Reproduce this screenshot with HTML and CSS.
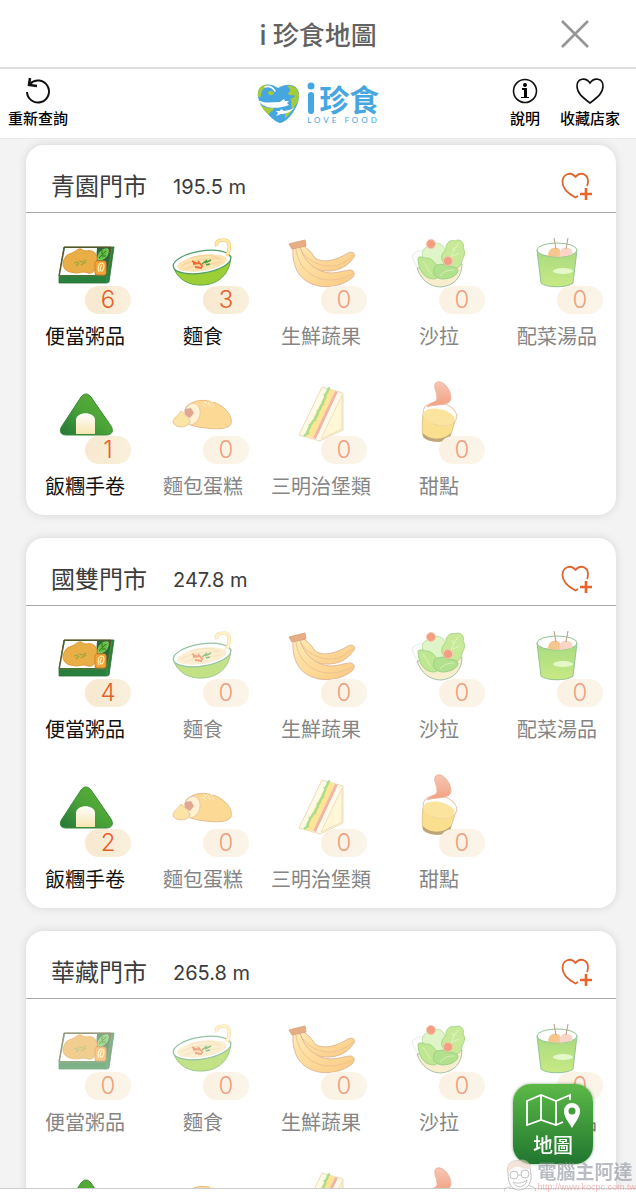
FILE: index.html
```html
<!DOCTYPE html>
<html lang="zh-Hant">
<head>
    <meta charset="UTF-8">
    <meta name="viewport" content="width=device-width, initial-scale=1.0">
    <title>i 珍食地圖</title>
    <link rel="stylesheet" href="styles.css">
</head>
<body>
    <!-- food icons -->
    <svg class="sprite" aria-hidden="true">
        <defs>
            <linearGradient id="g-green" x1="1" y1="0" x2="0" y2="1">
                <stop offset="0" stop-color="#5fb336"/><stop offset="0.5" stop-color="#4aa337"/><stop offset="1" stop-color="#23763a"/>
            </linearGradient>
            <linearGradient id="g-lime" x1="0" y1="0" x2="0" y2="1">
                <stop offset="0" stop-color="#6fc32c"/><stop offset="1" stop-color="#a5dc34"/>
            </linearGradient>
            <linearGradient id="g-banana" x1="0" y1="0" x2="1" y2="1">
                <stop offset="0" stop-color="#ffdf85"/><stop offset="1" stop-color="#f9a72e"/>
            </linearGradient>
            <linearGradient id="g-cream" x1="0" y1="0" x2="0" y2="1">
                <stop offset="0" stop-color="#fff"/><stop offset="1" stop-color="#f6e6b0"/>
            </linearGradient>
            <linearGradient id="g-lid" x1="0" y1="0" x2="0" y2="1">
                <stop offset="0" stop-color="#f3a184"/><stop offset="1" stop-color="#e8622c"/>
            </linearGradient>
        </defs>
        <symbol id="bento" viewBox="0 0 80 64">
            <path d="M19 17H69L64 52L62 53H14V45Z" fill="#27803c" stroke="#2d7038" stroke-width="0.8"/>
            <path d="M19 17H66L62 46H14Z" fill="#2a6a33" stroke="#7c4a22" stroke-width="0.8"/>
            <path d="M20 18H52L50 45H15Z" fill="#fff"/>
            <path d="M27 23C30 22 31 20 34 19C37 18 37 21 41 21C45 20 50 21 51 25C53 29 51 32 50 35C51 40 48 44 43 43C38 41 35 43 31 43C27 42 24 43 20 39C17 35 18 31 20 28C21 25 24 24 27 23Z" fill="#e9ae45" stroke="#dc9838"/>
            <path d="M29 33l4-1M31 36l3-3M34 31l5 1M36 35l5-3M39 30l2 1" stroke="#93a93a" stroke-width="1.2"/>
            <path d="M53 30C52 24 57 18 63 19C64 24 61 30 53 30Z" fill="#62bd3c" stroke="#8ed36c"/>
            <path d="M54 28L61 21M57 26l4 0M57 24l0-4" stroke="#2a7a2b" fill="none"/>
            <rect x="50" y="31" width="11" height="14" rx="2" fill="#f4a437" stroke="#d9822a"/>
            <path d="M54 42C52 37 54 33 57 33C60 34 59 39 57 41C54 41 55 37 57 35" fill="none" stroke="#fff0b3" stroke-width="1.2"/>
            <path d="M14 46H62V53M62 46L67 18" fill="none" stroke="#3f9850" stroke-width="0.8"/>
        </symbol>
        <symbol id="noodle" viewBox="0 0 80 64">
            <path d="M10 35C13 49 26 56 40 55C56 54 67 44 68 26Z" fill="#9bcf35" stroke="#5ea846"/>
            <ellipse cx="39" cy="32" rx="29" ry="11" transform="rotate(-9 39 32)" fill="#fff" stroke="#4f9c6a" stroke-width="1.2"/>
            <ellipse cx="39" cy="33" rx="25" ry="8" transform="rotate(-9 39 33)" fill="#fbe3b4"/>
            <path d="M18 36c10-6 25-8 40-7M22 39c11-5 23-4 36-7M27 28c11-3 20-4 29 0" fill="none" stroke="#f4d194"/>
            <path d="M30 34l7-1M32 37l7 1M35 31l5 6M29 31l5 3" stroke="#ec6a35" stroke-width="1.8"/>
            <path d="M39 34l5-4M42 33l6-3M43 35l4-1" stroke="#4ba13a" stroke-width="1.6"/>
            <path d="M64 26C67 19 68 9 60 10C56 10 52 12 54 16" fill="none" stroke="#f3cd6f" stroke-width="3.600"/>
            <path d="M64 26C67 19 68 9 60 10C56 10 52 12 54 16" fill="none" stroke="#ffedb0" stroke-width="2"/>
        </symbol>
        <symbol id="banana" viewBox="0 0 80 64">
            <path d="M14 17C19 12 23 15 25 18C29 20 31 24 34 28C42 34 56 30 67 23C71 21 75 23 73 27C67 36 58 41 47 41C29 41 15 30 14 17Z" fill="url(#g-banana)" stroke="#cf8a55"/>
            <path d="M19 18C24 30 39 37 52 36C61 35 68 29 73 25" fill="none" stroke="#e29a4e"/>
            <path d="M12 18C17 15 19 17 20 20C24 32 35 42 49 43C58 43 64 40 70 40C74 41 74 45 71 48C62 55 50 58 38 56C18 52 11 37 12 18Z" fill="url(#g-banana)" stroke="#cf8a55"/>
            <path d="M15 19C17 37 31 50 49 50C60 50 67 46 72 44" fill="none" stroke="#e29a4e"/>
            <path d="M8 14L24 10L25 16L11 19Z" fill="#d97a32" stroke="#c66c32"/>
        </symbol>
        <symbol id="salad" viewBox="0 0 80 64">
            <path d="M19 38C16 34 12 27 14 24C18 22 20 20 24 21" fill="#fff" stroke="#d3dccf"/>
            <path d="M18 38C22 50 31 57 42 57C54 56 63 48 63 34Z" fill="#f5e3ae" stroke="#6b9b70"/>
            <path d="M24 27C21 20 28 15 32 17C37 10 46 14 46 22L44 38H28Z" fill="#cdf0a2" stroke="#8fcf66"/>
            <path d="M48 35C40 31 42 23 47 20C46 13 52 9 56 11C61 8 66 13 64 18C67 22 65 27 63 30C63 36 58 40 51 38Z" fill="#a5dc55" stroke="#6fbb3c"/>
            <path d="M49 34C53 26 54 20 59 14M55 20l-2-3M54 26l6-3" fill="none" stroke="#d2ef9f"/>
            <path d="M19 28C22 25 26 29 29 28C35 30 37 34 39 39C42 44 40 48 35 49C24 49 19 38 19 28Z" fill="#96d84a" stroke="#66b83c"/>
            <path d="M35 39C36 33 42 35 45 34C49 38 57 35 59 40C59 45 52 49 43 49C38 48 33 46 35 39Z" fill="#7fce42" stroke="#5cae38"/>
            <path d="M41 46C46 40 51 40 55 40M24 31l8 13" fill="none" stroke="#c2e58b"/>
            <circle cx="32" cy="14" r="4.5" fill="#ea5e2d" stroke="#f3a179"/>
            <circle cx="49" cy="31" r="4.5" fill="#ea5e2d" stroke="#f3a179"/>
        </symbol>
        <symbol id="soup" viewBox="0 0 80 64">
            <path d="M20 20L24 53C29 58 51 58 56 53L60 20Z" fill="url(#g-lime)" stroke="#4b9b50"/>
            <ellipse cx="40" cy="20" rx="20" ry="7" fill="#fff" stroke="#4b9b50"/>
            <path d="M31 26C31 20 35 17 39 18C44 18 44 22 43 27Z" fill="#f3a145"/>
            <path d="M43 27C41 20 46 17 50 18C55 18 56 21 55 25Z" fill="#f7b89e"/>
            <path d="M37 8L39 19M51 8L49 19" stroke="#8b5b30"/>
            <ellipse cx="46" cy="41" rx="10" ry="3" fill="#d5f4a8"/>
        </symbol>
        <symbol id="onigiri" viewBox="0 0 80 64">
            <path d="M36 17C39 13 43 13 46 17L66 46C69 51 67 55 61 55H21C15 55 14 50 17 46Z" fill="url(#g-green)" stroke="#3a8a38"/>
            <path d="M31 54V40C31 31 50 31 50 40V54Z" fill="url(#g-cream)"/>
        </symbol>
        <symbol id="bread" viewBox="0 0 80 64">
            <path d="M23 27C31 19 42 19 53 23C64 28 70 37 68 44C65 50 50 49 43 48C35 47 27 46 23 42Z" fill="#fbc350" stroke="#d79340"/>
            <ellipse cx="29" cy="34" rx="8" ry="11" transform="rotate(15 29 34)" fill="#ffeab7" stroke="#dfa46e"/>
            <path d="M22 29L28 28L31 33L27 38L22 35Z" fill="#cc6d4e"/>
            <path d="M18 31C21 34 26 37 27 42C24 49 11 48 10 42C10 38 15 36 18 31Z" fill="#fbd36b" stroke="#dfa05c"/>
            <path d="M40 24l3 3M45 23l2 3M50 24l0 3M41 22l3 1M47 21l3 1" stroke="#fff1bb"/>
        </symbol>
        <symbol id="sandwich" viewBox="0 0 80 64">
            <path d="M41 7L62 13V50L39 61L18 55Z" fill="#fff7d5" stroke="#e4c58c"/>
            <path d="M47 9L54 11L32 58L23 56Z" fill="#ffd44e"/>
            <path d="M54 11L57 12L35 59L32 58Z" fill="#e8876b"/>
            <path d="M57 12L61 14L39 60L35 59Z" fill="#fff5e1"/>
            <path d="M49 8C45 9 48 13 44 15C46 18 41 20 42 24C39 25 40 30 37 31C38 35 34 36 34 40C31 40 32 44 29 45C30 49 25 50 27 53L23 56" fill="none" stroke="#72c744" stroke-width="2.500"/>
            <path d="M61 15V49L40 59Z" fill="#fff3bf" stroke="#e8ce89"/>
        </symbol>
        <symbol id="pudding" viewBox="0 0 80 64">
            <path d="M24 34C23 45 23 52 24 56C30 63 47 63 51 57L57 38Z" fill="#f8cb45" stroke="#c99a40"/>
            <path d="M24 53C30 60 44 61 52 53L51 58C46 63 29 63 24 57Z" fill="#926b22"/>
            <ellipse cx="41" cy="34" rx="17" ry="11" transform="rotate(14 41 34)" fill="#fff" stroke="#dba077"/>
            <ellipse cx="40" cy="37" rx="16" ry="8" transform="rotate(12 40 37)" fill="#f9d55e"/>
            <path d="M36 4C38 0 44 2 47 6C51 10 54 19 50 22C45 26 35 24 28 27C32 21 39 23 38 17C38 11 35 10 36 4Z" fill="url(#g-lid)" stroke="#e4855c"/>
        </symbol>
        <symbol id="heart-add" viewBox="0 0 32 32">
            <path d="M18 26L15.500 27.500C7 23 2.500 18 2.500 12C2.500 4 11 1 15.500 7C20 1 28 4 28 11C28 13 27.500 15 27 16" fill="none" stroke="#dc6530" stroke-width="1.800" stroke-linejoin="round"/>
            <path d="M26 18V30M20 24H32" fill="none" stroke="#e8642a" stroke-width="2.600"/>
        </symbol>
    </svg>

    <header class="title-bar">
        <h1>i 珍食地圖</h1>
        <button class="close" type="button" aria-label="關閉">
            <svg width="28" height="28" viewBox="0 0 28 28"><path d="M1 1L27 27M27 1L1 27" stroke="#959595" stroke-width="2.600"/></svg>
        </button>
    </header>

    <nav class="menu">
        <div class="menu-side">
            <a class="menu-item" href="#">
                <svg width="28" height="28" viewBox="0 0 28 28" fill="none" stroke="#111" stroke-width="2"><path d="M3 15A11 11 0 1 0 6 7"/><path d="M6 1L5 8L13 9" stroke-width="2.500"/></svg>
                重新查詢
            </a>
        </div>
        <div class="logo">
            <svg width="46" height="42" viewBox="0 0 46 42">
                <path d="M24 41C18 40 4 26 2 15C0 5 10-2 22 6C34-1 44 4 43 14C43 25 32 40 24 41Z" fill="#46a7e0"/>
                <path d="M2 12C2 6 7 2 11 3C9 6 6 7 5 13C5 16 3 16 2 14ZM12 10C14 8 18 9 18 11C17 14 12 14 12 10ZM31 4C38 2 43 7 43 14C42 21 39 25 36 27C34 23 37 19 34 17C38 16 40 14 38 13C33 14 31 12 33 10C36 8 33 6 31 4ZM4 22C8 26 13 26 18 26C17 30 13 29 13 33C9 30 6 26 4 22ZM29 31L36 28C34 32 31 35 29 36Z" fill="#a5cb3d"/>
                <path d="M2 18C9 22 17 20 24 20L28 17L29 19L33 19L31 21L33 23C23 27 8 28 2 18ZM39 25C35 30 30 32 25 32L20 34L22 31L20 29L24 29L25 27L28 29C33 28 37 27 39 25Z" fill="#fff"/>
                <path d="M9 5C14 3 17 6 19 9" fill="none" stroke="#fff" stroke-width="1.500" stroke-linecap="round"/>
            </svg>
            <div class="logo-words">
                <div class="logo-main">
                    <svg width="8" height="32" viewBox="0 0 8 32" fill="#46a7e0"><circle cx="4" cy="4" r="3.500"/><rect x="1" y="10" width="6" height="22" rx="3"/></svg>
                    <span>珍食</span>
                </div>
                <span class="logo-sub">LOVE FOOD</span>
            </div>
        </div>
        <div class="menu-side menu-right">
            <a class="menu-item" href="#">
                <svg width="28" height="28" viewBox="0 0 28 28"><circle cx="14" cy="14" r="11.500" fill="none" stroke="#111" stroke-width="1.600"/><circle cx="14" cy="8" r="2"/><path d="M11 11H16V20H18V21H10V20H13V13H11Z"/></svg>
                說明
            </a>
            <a class="menu-item" href="#">
                <svg width="28" height="28" viewBox="0 0 28 28"><path d="M14 26C6 20 1 16 1 9C1 1 10 0 14 6C18 0 27 1 27 9C27 16 22 20 14 26Z" fill="none" stroke="#111" stroke-width="1.600"/></svg>
                收藏店家
            </a>
        </div>
    </nav>

    <main class="store-list">
        <section class="store">
            <div class="store-head">
                <h2>青園門市</h2><span class="distance">195.5 m</span>
                <button class="favorite" type="button" aria-label="收藏青園門市"><svg width="32" height="32"><use href="#heart-add"/></svg></button>
            </div>
            <ul class="foods">
                <li class="food"><div class="pic"><svg><use href="#bento"/></svg><span class="count">6</span></div><p>便當粥品</p></li>
                <li class="food"><div class="pic"><svg><use href="#noodle"/></svg><span class="count">3</span></div><p>麵食</p></li>
                <li class="food empty"><div class="pic"><svg><use href="#banana"/></svg><span class="count">0</span></div><p>生鮮蔬果</p></li>
                <li class="food empty"><div class="pic"><svg><use href="#salad"/></svg><span class="count">0</span></div><p>沙拉</p></li>
                <li class="food empty"><div class="pic"><svg><use href="#soup"/></svg><span class="count">0</span></div><p>配菜湯品</p></li>
                <li class="food"><div class="pic"><svg><use href="#onigiri"/></svg><span class="count">1</span></div><p>飯糰手卷</p></li>
                <li class="food empty"><div class="pic"><svg><use href="#bread"/></svg><span class="count">0</span></div><p>麵包蛋糕</p></li>
                <li class="food empty"><div class="pic"><svg><use href="#sandwich"/></svg><span class="count">0</span></div><p>三明治堡類</p></li>
                <li class="food empty"><div class="pic"><svg><use href="#pudding"/></svg><span class="count">0</span></div><p>甜點</p></li>
            </ul>
        </section>

        <section class="store">
            <div class="store-head">
                <h2>國雙門市</h2><span class="distance">247.8 m</span>
                <button class="favorite" type="button" aria-label="收藏國雙門市"><svg width="32" height="32"><use href="#heart-add"/></svg></button>
            </div>
            <ul class="foods">
                <li class="food"><div class="pic"><svg><use href="#bento"/></svg><span class="count">4</span></div><p>便當粥品</p></li>
                <li class="food empty"><div class="pic"><svg><use href="#noodle"/></svg><span class="count">0</span></div><p>麵食</p></li>
                <li class="food empty"><div class="pic"><svg><use href="#banana"/></svg><span class="count">0</span></div><p>生鮮蔬果</p></li>
                <li class="food empty"><div class="pic"><svg><use href="#salad"/></svg><span class="count">0</span></div><p>沙拉</p></li>
                <li class="food empty"><div class="pic"><svg><use href="#soup"/></svg><span class="count">0</span></div><p>配菜湯品</p></li>
                <li class="food"><div class="pic"><svg><use href="#onigiri"/></svg><span class="count">2</span></div><p>飯糰手卷</p></li>
                <li class="food empty"><div class="pic"><svg><use href="#bread"/></svg><span class="count">0</span></div><p>麵包蛋糕</p></li>
                <li class="food empty"><div class="pic"><svg><use href="#sandwich"/></svg><span class="count">0</span></div><p>三明治堡類</p></li>
                <li class="food empty"><div class="pic"><svg><use href="#pudding"/></svg><span class="count">0</span></div><p>甜點</p></li>
            </ul>
        </section>

        <section class="store">
            <div class="store-head">
                <h2>華藏門市</h2><span class="distance">265.8 m</span>
                <button class="favorite" type="button" aria-label="收藏華藏門市"><svg width="32" height="32"><use href="#heart-add"/></svg></button>
            </div>
            <ul class="foods">
                <li class="food empty"><div class="pic"><svg><use href="#bento"/></svg><span class="count">0</span></div><p>便當粥品</p></li>
                <li class="food empty"><div class="pic"><svg><use href="#noodle"/></svg><span class="count">0</span></div><p>麵食</p></li>
                <li class="food empty"><div class="pic"><svg><use href="#banana"/></svg><span class="count">0</span></div><p>生鮮蔬果</p></li>
                <li class="food empty"><div class="pic"><svg><use href="#salad"/></svg><span class="count">0</span></div><p>沙拉</p></li>
                <li class="food empty"><div class="pic"><svg><use href="#soup"/></svg><span class="count">0</span></div><p>配菜湯品</p></li>
                <li class="food"><div class="pic"><svg><use href="#onigiri"/></svg></div></li>
                <li class="food empty"><div class="pic"><svg><use href="#bread"/></svg></div></li>
                <li class="food empty"><div class="pic"><svg><use href="#sandwich"/></svg></div></li>
                <li class="food empty"><div class="pic"><svg><use href="#pudding"/></svg></div></li>
            </ul>
        </section>
    </main>

    <footer class="bottom-bar"></footer>

    <button class="map-button" type="button">
        <svg width="56" height="36" viewBox="0 0 56 36" fill="none" stroke="#fff" stroke-width="1.800">
            <path d="M45 7V2L31 8L16 2L2 8V32L16 27L31 32L38 29M16 2V27M31 8V32"/>
            <path d="M47 35C43 28 39 24 39 18A8 8 0 0 1 55 18C55 24 51 28 47 35Z" fill="#fff" stroke="none"/>
            <circle cx="47" cy="18" r="3.500" fill="#3f9d3a" stroke="none"/>
        </svg>
        地圖
    </button>

    <div class="watermark">
        <svg width="34" height="34" viewBox="0 0 34 34" fill="#fff" stroke="#9a9a9a">
            <path d="M5 15C3 6 8 2 15 3C20 0 27 3 27 10L28 17C29 25 24 32 16 32C8 32 5 25 5 15Z"/>
            <path d="M5 14C3 5 9 2 15 3C21 0 28 4 27 11C22 13 17 8 13 9C9 9 8 13 5 14Z" fill="#eed2c4" stroke="none"/>
            <circle cx="11" cy="17" r="4"/><circle cx="22" cy="16" r="4"/>
            <path d="M15 17H18M10 24C15 26 20 25 24 22C23 30 13 31 10 24ZM1 33C3 29 6 29 8 29M26 28C30 28 32 30 33 33"/>
        </svg>
        <div class="watermark-text">
            <strong>電腦主阿達</strong>
            <span>http://www.kocpc.com.tw</span>
        </div>
    </div>
</body>
</html>
```
FILE: styles.css
```css
* {
    box-sizing: border-box;
}

body {
    font-family: "Noto Sans CJK TC", sans-serif;
    margin: 0;
    height: 100vh;
    display: flex;
    flex-direction: column;
    background-color: #f3f3f3;
    color: #111;
    overflow: hidden;
}

h1, h2, p, ul {
    margin: 0;
    padding: 0;
    font-weight: 400;
}

button {
    font-family: inherit;
    border: none;
    padding: 0;
    background: none;
    cursor: pointer;
}

svg {
    display: block;
}

.sprite {
    position: absolute;
    width: 0;
    height: 0;
}

.title-bar {
    display: grid;
    grid-template-columns: 1fr auto 1fr;
    align-items: center;
    flex: none;
    height: 69px;
    padding: 0 47px;
    background-color: #fff;
    border-bottom: 2px solid #dedede;
}

.title-bar h1 {
    grid-column: 2;
    font-size: 26px;
    font-weight: 500;
    color: #626262;
}

.close {
    justify-self: end;
}

.menu {
    display: grid;
    grid-template-columns: 1fr auto 1fr;
    align-items: center;
    flex: none;
    height: 70px;
    padding: 0 16px 2px 16px;
    background-color: #fff;
    border-bottom: 1px solid #e8e8e8;
}

.menu-side {
    display: flex;
    gap: 20px;
    margin-left: -8px;
}

.menu-right {
    justify-content: flex-end;
}

.menu-item {
    display: flex;
    flex-direction: column;
    align-items: center;
    gap: 2px;
    font-size: 15px;
    font-weight: 500;
    line-height: 22px;
    color: #000;
    text-decoration: none;
}

.logo {
    display: flex;
    align-items: center;
    gap: 5px;
    color: #46a7e0;
}

.logo-main {
    display: flex;
    align-items: center;
    gap: 4px;
    font-size: 30px;
    font-weight: 700;
    line-height: 34px;
}

.logo-sub {
    display: block;
    font-family: Lato, sans-serif;
    font-size: 8px;
    line-height: 10px;
    letter-spacing: 3px;
}

.store-list {
    flex: 1;
    min-height: 0;
    overflow: hidden;
    display: flex;
    flex-direction: column;
    gap: 23px;
    padding: 6px 20px 0 26px;
}

.store {
    flex: none;
    background-color: #fff;
    border-radius: 18px;
    box-shadow: 0 0 10px rgba(0, 0, 0, 0.12);
}

.store-head {
    display: flex;
    align-items: center;
    height: 68px;
    padding: 14px 24px 0 25px;
    border-bottom: 1px solid #a8a8a8;
    color: #3c3c3c;
}

.store-head h2 {
    font-size: 24px;
    line-height: 32px;
    margin: 0 26px 2px 0;
}

.distance {
    font-family: Inter, sans-serif;
    font-size: 20px;
    line-height: 28px;
    padding-top: 2px;
}

.favorite {
    margin-left: auto;
}

.foods {
    display: grid;
    grid-template-columns: repeat(5, 1fr);
    row-gap: 30px;
    padding: 17px 0 15px;
    list-style: none;
}

.food {
    display: flex;
    flex-direction: column;
    align-items: center;
    gap: 8px;
}

.food p {
    font-size: 20px;
    line-height: 28px;
    white-space: nowrap;
}

.pic {
    position: relative;
    width: 80px;
    height: 84px;
}

.pic svg {
    width: 80px;
    height: 64px;
}

/* stock left, over the lower right of the icon */
.count {
    position: absolute;
    right: -6px;
    bottom: 0;
    width: 46px;
    height: 28px;
    border-radius: 14px;
    background: linear-gradient(90deg, #f8e8cf, #f9f0dc);
    font-family: Inter, sans-serif;
    font-size: 24px;
    font-weight: 300;
    line-height: 28px;
    text-align: center;
    color: #e4602b;
}

.empty .pic {
    opacity: 0.6;
}

.empty p {
    color: #858585;
}

.bottom-bar {
    flex: none;
    height: 12px;
    background-color: #fff;
    border-top: 1px solid #ccc;
    z-index: 1;
}

.map-button {
    position: fixed;
    right: 43px;
    bottom: 36px;
    width: 80px;
    height: 80px;
    display: flex;
    flex-direction: column;
    align-items: center;
    justify-content: center;
    gap: 2px;
    padding-top: 4px;
    border-radius: 18px;
    background: linear-gradient(#5cb947, #21762f);
    box-shadow: 0 0 3px rgba(0, 80, 0, 0.5);
    color: #fff;
    font-size: 20px;
    font-weight: 500;
    line-height: 28px;
}

.watermark {
    position: fixed;
    right: 0;
    bottom: 8px;
    z-index: 2;
    display: flex;
    align-items: flex-end;
    opacity: 0.6;
}

.watermark-text {
    display: flex;
    flex-direction: column;
}

.watermark strong {
    font-size: 19px;
    line-height: 22px;
    color: #8b919b;
}

.watermark span {
    font-family: "Liberation Sans", sans-serif;
    font-size: 9px;
    line-height: 10px;
    color: #e88d8d;
}
```
